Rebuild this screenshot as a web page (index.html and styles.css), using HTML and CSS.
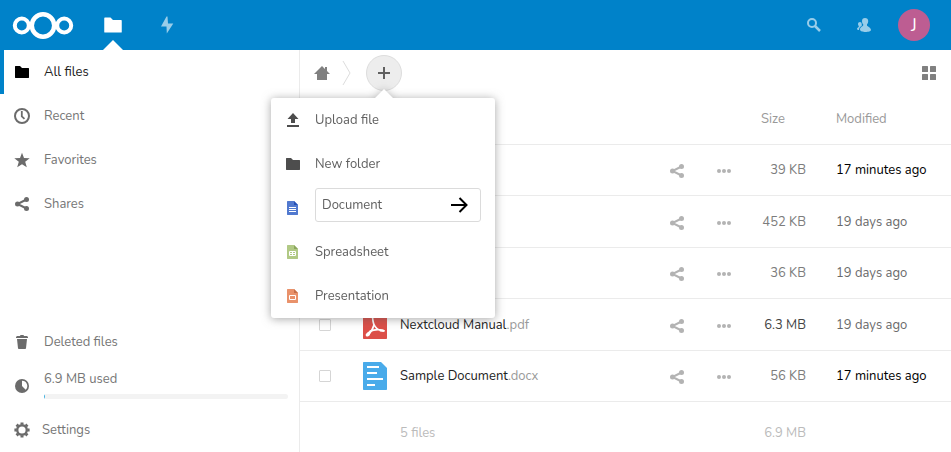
FILE: index.html
```html
<!DOCTYPE html>
<html lang="en">
<head>
<meta charset="utf-8">
<title>Files</title>
<link rel="stylesheet" href="styles.css">
</head>
<body>
<svg class="sprite" aria-hidden="true">
  <symbol id="folder" viewBox="0 0 16 16"><path d="M1.5 2C1.2 2 1 2.200 1 2.500v11c0 .3.2.5.5.5h13c.3 0 .5-.2.5-.5v-9c0-.3-.2-.5-.5-.5H8L6 2z"/></symbol>
  <symbol id="share" viewBox="0 0 16 16"><path d="M12.500 3.500L3.500 8l9 4.500" fill="none" stroke="currentColor" stroke-width="2"/><circle cx="12.500" cy="3.500" r="2.500"/><circle cx="3.500" cy="8" r="2.500"/><circle cx="12.500" cy="12.500" r="2.500"/></symbol>
  <symbol id="more" viewBox="0 0 16 16"><circle cx="3" cy="8" r="2"/><circle cx="8" cy="8" r="2"/><circle cx="13" cy="8" r="2"/></symbol>
</svg>
<header class="header">
  <a class="logo" href="#" aria-label="Home">
    <svg width="62" height="30" viewBox="0 0 62 30"><g fill="none" stroke="#fff"><circle cx="31" cy="15.500" r="11.200" stroke-width="4.500"/><circle cx="9.800" cy="15.500" r="7" stroke-width="4"/><circle cx="52.200" cy="15.500" r="7" stroke-width="4"/></g></svg>
  </a>
  <nav class="apps" aria-label="Apps">
    <a class="app current" href="#" aria-label="Files"><svg width="20" height="20"><use href="#folder"/></svg></a>
    <a class="app" href="#" aria-label="Activity"><svg width="20" height="20" viewBox="0 0 20 20"><path d="M9.500 1.500L4 11.500h5.500L9.800 18.500 16.300 8.500h-5.300L10.500 1.500z"/></svg></a>
  </nav>
  <div class="tools">
    <button class="tool" aria-label="Search"><svg width="16" height="16" viewBox="0 0 16 16"><circle cx="6" cy="6" r="4" fill="none" stroke="currentColor" stroke-width="2"/><path d="M9 9l5 5" stroke="currentColor" stroke-width="2.500"/></svg></button>
    <button class="tool" aria-label="Contacts"><svg width="16" height="16" viewBox="0 0 16 16"><path d="M9 1C7 1 6 2.200 6 4c0 1.500.5 2.500 1.200 3.300v1.200C6.500 9.500 4 10 4 12.500 4 14.300 7 15 9.500 15s5.500-.7 5.500-2c0-2.500-3.500-3.300-4-4.500V7.300c.7-.8 1.200-1.800 1.200-3.300C12.200 2.200 11 1 9 1z"/><path d="M4 5C2.800 5 2 5.800 2 7c0 .9.300 1.500.8 2v.8C2.300 10.500 1 10.700 1 12.200c0 .6 1 .8 2 .8 0-2.500 1.500-3.200 2.700-4C6 8.400 6 5 4 5z"/></svg></button>
    <button class="tool" aria-label="Account"><span class="avatar">J</span></button>
  </div>
</header>
<div class="layout">
  <nav class="sidebar" aria-label="Files">
    <a class="entry active" href="#"><svg width="16" height="16"><use href="#folder"/></svg>All files</a>
    <a class="entry" href="#"><svg width="16" height="16" viewBox="0 0 16 16"><circle cx="8" cy="8" r="7" fill="none" stroke="currentColor" stroke-width="2"/><path d="M7.800 3v5.300l2.700 2.500" fill="none" stroke="currentColor" stroke-width="1.800"/></svg>Recent</a>
    <a class="entry" href="#"><svg width="16" height="16" viewBox="0 0 16 16"><path d="M8 .7L10 6l5.700.3-4.500 3.500 1.600 5.500L8 12.200l-4.800 3.100 1.600-5.500L.3 6.300 6 6z"/></svg>Favorites</a>
    <a class="entry" href="#"><svg width="16" height="16"><use href="#share"/></svg>Shares</a>
    <a class="entry trash" href="#"><svg width="16" height="16" viewBox="0 0 16 16"><path d="M6.500 1L6 2H3L2 3v1h12V3l-1-1h-3l-.5-1zM3 5l1 9.200c0 .4.400.8.800.8h6.400c.4 0 .8-.4.800-.8L13 5z"/></svg>Deleted files</a>
    <div class="quota">
      <svg width="16" height="16" viewBox="0 0 16 16"><circle cx="8" cy="8" r="7"/><path d="M8 2.800A5.200 5.200 0 0 1 11.700 11.700L8 8z" fill="#fff"/></svg>
      <div class="usage"><label for="used">6.9 MB used</label><progress id="used" value="0.4" max="100"></progress></div>
    </div>
    <button class="entry settings"><svg width="16" height="16" viewBox="0 0 16 16"><circle cx="8" cy="8" r="4.800" fill="none" stroke="currentColor" stroke-width="2.400"/><path d="M8 .4v2.200M8 13.400v2.200M.4 8h2.200M13.400 8h2.200M2.600 2.600l1.600 1.600M11.800 11.800l1.600 1.600M2.600 13.400l1.600-1.600M11.800 4.200l1.600-1.600" stroke="currentColor" stroke-width="3"/></svg>Settings</button>
  </nav>
  <main class="content">
    <div class="controls">
      <a class="home" href="#" aria-label="Home folder"><svg width="16" height="16" viewBox="0 0 16 16"><path d="M8 1L0 9h3v6h10V9h3l-3-3V2h-2v2z"/></svg></a>
      <svg class="crumb" width="10" height="26" viewBox="0 0 10 26"><path d="M1 1l7 12-7 12" fill="none" stroke="#ddd"/></svg>
      <div class="create">
        <button class="plus" aria-label="New" aria-expanded="true"><svg width="16" height="16" viewBox="0 0 16 16"><path d="M8 2v12M2 8h12" stroke="currentColor" stroke-width="2"/></svg></button>
        <div class="menu">
          <button class="option"><svg width="16" height="16" viewBox="0 0 16 16"><path d="M8 1L2.500 7H6v4h4V7h3.500zM2 13h12v2H2z"/></svg>Upload file</button>
          <button class="option"><svg width="16" height="16"><use href="#folder"/></svg>New folder</button>
          <form class="option">
            <svg width="16" height="16" viewBox="0 0 16 16"><path fill="#5179cf" d="M2.500 1H9l4 4v9.500c0 .3-.2.500-.5.500h-10c-.3 0-.5-.2-.5-.5v-13c0-.3.2-.5.500-.5z"/><path fill="#2550b5" d="M9 1l4 4H9z"/><path d="M4 7.500h7M4 9.500h7M4 11.500h7" stroke="#fff"/></svg>
            <div class="field"><input type="text" aria-label="Document name" value="Document"><button class="submit" type="button" aria-label="Create"><svg width="18" height="18" viewBox="0 0 18 18"><path d="M1 9h15M9.500 2l7 7-7 7" fill="none" stroke="#000" stroke-width="2"/></svg></button></div>
          </form>
          <button class="option"><svg width="16" height="16" viewBox="0 0 16 16"><path fill="#b1c985" d="M2.500 1H9l4 4v9.500c0 .3-.2.500-.5.500h-10c-.3 0-.5-.2-.5-.5v-13c0-.3.2-.5.500-.5z"/><path fill="#8ba65e" d="M9 1l4 4H9z"/><path d="M4.500 7.500h6v4h-6zM4 9.500h7M7.500 7.500v4" fill="none" stroke="#fff"/></svg>Spreadsheet</button>
          <button class="option"><svg width="16" height="16" viewBox="0 0 16 16"><path fill="#e9926b" d="M2.500 1H9l4 4v9.500c0 .3-.2.500-.5.500h-10c-.3 0-.5-.2-.5-.5v-13c0-.3.2-.5.500-.5z"/><path fill="#c5714b" d="M9 1l4 4H9z"/><path d="M4.500 7.500h6v4h-6z" fill="none" stroke="#fff"/></svg>Presentation</button>
        </div>
      </div>
      <button class="view" aria-label="Grid view"><svg width="16" height="16" viewBox="0 0 16 16"><rect x="1" y="1" width="6" height="6" rx=".5"/><rect x="9" y="1" width="6" height="6" rx=".5"/><rect x="1" y="9" width="6" height="6" rx=".5"/><rect x="9" y="9" width="6" height="6" rx=".5"/></svg></button>
    </div>
    <table class="files">
      <colgroup><col class="c-check"><col class="c-icon"><col><col class="c-act"><col class="c-act"><col class="c-size"><col class="c-date"></colgroup>
      <thead><tr><th></th><th></th><th></th><th></th><th></th><th class="size-head">Size</th><th>Modified</th></tr></thead>
      <tbody>
        <tr><td></td><td></td><td></td><td class="act"><button aria-label="Share"><svg width="16" height="16"><use href="#share"/></svg></button></td><td class="act"><button aria-label="More"><svg width="16" height="16"><use href="#more"/></svg></button></td><td class="size">39 KB</td><td class="new">17 minutes ago</td></tr>
        <tr><td></td><td></td><td></td><td class="act"><button aria-label="Share"><svg width="16" height="16"><use href="#share"/></svg></button></td><td class="act"><button aria-label="More"><svg width="16" height="16"><use href="#more"/></svg></button></td><td class="size">452 KB</td><td class="old">19 days ago</td></tr>
        <tr><td></td><td></td><td></td><td class="act"><button aria-label="Share"><svg width="16" height="16"><use href="#share"/></svg></button></td><td class="act"><button aria-label="More"><svg width="16" height="16"><use href="#more"/></svg></button></td><td class="size">36 KB</td><td class="old">19 days ago</td></tr>
        <tr><td class="check"><input type="checkbox" aria-label="Select Nextcloud Manual.pdf"></td><td class="thumb"><svg width="32" height="32" viewBox="0 0 32 32"><path fill="#dc4f48" d="M5 2h16l7 7v20c0 .6-.4 1-1 1H5c-.6 0-1-.4-1-1V3c0-.6.4-1 1-1z"/><path d="M14.300 7c-1.500 1-.5 5 .7 9-1 4-3.500 7.500-5.500 9.800" fill="none" stroke="#fff" stroke-width="1.800"/><path d="M15 15.500c1.500 3.500 4 5.500 7.500 6.500M10.500 22.500c4-1.800 8-2.300 12-1.500" fill="none" stroke="#fff" stroke-width="1.700"/><path d="M12 21.500c-2.500.8-5.500 3-5.300 4.800.3 1.800 2.500 1.700 4-.3zM21 20.200c2.500-.2 5 .2 5 1.600 0 1.500-2.500 1.500-5 .2z" fill="#fff"/></svg></td><td><a class="name" href="#">Nextcloud Manual<span>.pdf</span></a></td><td class="act"><button aria-label="Share"><svg width="16" height="16"><use href="#share"/></svg></button></td><td class="act"><button aria-label="More"><svg width="16" height="16"><use href="#more"/></svg></button></td><td class="size large">6.3 MB</td><td class="old">19 days ago</td></tr>
        <tr><td class="check"><input type="checkbox" aria-label="Select Sample Document.docx"></td><td class="thumb"><svg width="32" height="32" viewBox="0 0 32 32"><path fill="#49abea" d="M5 2h17l6 6v21c0 .6-.4 1-1 1H5c-.6 0-1-.4-1-1V3c0-.6.4-1 1-1z"/><path d="M8 7h12M8 13h10M8 19h16M8 25h8" stroke="#fff" stroke-width="2"/></svg></td><td><a class="name" href="#">Sample Document<span>.docx</span></a></td><td class="act"><button aria-label="Share"><svg width="16" height="16"><use href="#share"/></svg></button></td><td class="act"><button aria-label="More"><svg width="16" height="16"><use href="#more"/></svg></button></td><td class="size">56 KB</td><td class="new">17 minutes ago</td></tr>
      </tbody>
      <tfoot><tr><td></td><td></td><td>5 files</td><td></td><td></td><td class="size">6.9 MB</td><td></td></tr></tfoot>
    </table>
  </main>
</div>
</body>
</html>
```
FILE: styles.css
```css
* { box-sizing: border-box; }
body {
  margin: 0;
  height: 100vh;
  display: flex;
  flex-direction: column;
  overflow: hidden;
  background: #fff;
  color: #222;
  font: 13px/20px Nunito, Lato, sans-serif;
}
button, input { font: inherit; color: inherit; }
button { padding: 0; border: 0; background: none; }
a { color: inherit; text-decoration: none; }
svg { display: block; flex: none; fill: currentColor; }
.sprite { position: absolute; width: 0; height: 0; }

.header { display: flex; flex: none; height: 50px; background: #0082c9; color: #fff; }
.logo { display: flex; align-items: center; padding: 0 20px 0 12px; }
.apps { display: flex; }
.app { position: relative; display: flex; align-items: center; justify-content: center; width: 38px; margin-right: 16px; color: #99cde9; }
.app.current { color: #fff; }
.app.current::after { content: ""; position: absolute; bottom: 0; left: 9px; border: 10px solid transparent; border-top: 0; border-bottom-color: #fff; }
.tools { display: flex; margin-left: auto; padding-right: 12px; }
.tool { display: flex; align-items: center; justify-content: center; width: 50px; color: #99cde9; }
.avatar { width: 32px; height: 32px; border-radius: 50%; background: #bd5d92; color: #fff; font-size: 18px; line-height: 32px; text-align: center; }

.layout { display: flex; flex: 1; min-height: 0; }
.sidebar { display: flex; flex-direction: column; flex: none; width: 300px; border-right: 1px solid #ebebeb; color: #767676; }
.entry { display: flex; flex: none; align-items: center; gap: 14px; height: 44px; padding-left: 14px; text-align: left; }
.active { padding-left: 10px; border-left: 4px solid #0082c9; color: #222; }
.trash { margin-top: auto; }
.settings { gap: 12px; }
.quota { display: flex; align-items: center; gap: 14px; flex: none; height: 44px; padding: 0 11px 0 14px; }
.usage { display: flex; flex: 1; flex-direction: column; gap: 5px; padding-bottom: 4px; }
.entry svg, .quota svg { color: #6b6b6b; }
.entry.active svg { color: #000; }
progress { appearance: none; display: block; width: 100%; height: 5px; border: 0; border-radius: 3px; overflow: hidden; background: #f3f3f3; }
progress::-webkit-progress-bar { background: #f3f3f3; }
progress::-webkit-progress-value { background: #45b2e0; }

.content { flex: 1; min-width: 0; }
.controls { display: flex; align-items: center; height: 44px; padding: 1px 14px 0; color: #808080; }
.crumb { margin: 0 14px 0 12px; }
.create { position: relative; }
.plus { display: flex; align-items: center; justify-content: center; width: 36px; height: 36px; border: 1px solid #ddd; border-radius: 50%; background: #ededed; color: #606060; }
.view { margin-left: auto; }
.menu { position: absolute; z-index: 2; top: 43px; right: -93px; width: 224px; border-radius: 3px; background: #fff; color: #606060; filter: drop-shadow(0 1px 5px rgba(77, 77, 77, .5)); }
.menu::before { content: ""; position: absolute; top: -9px; right: 102px; border: 9px solid transparent; border-top: 0; border-bottom-color: #fff; }
.option { display: flex; align-items: center; gap: 14px; width: 100%; height: 44px; padding: 0 14px; text-align: left; }
.option > svg { color: #4d4d4d; }
.field { display: flex; flex: 1; min-width: 0; height: 34px; margin-bottom: 6px; border: 1px solid #dbdbdb; border-radius: 3px; }
.field input { flex: 1; min-width: 0; padding: 0 6px; border: 0; outline: 0; background: none; }
.submit { padding: 0 12px; }

.files { width: 100%; table-layout: fixed; border-collapse: separate; border-spacing: 0; }
.c-check, .c-icon { width: 50px; }
.c-act { width: 47px; }
.c-size { width: 89px; }
.c-date { width: 115px; }
th, td { padding: 0; white-space: nowrap; }
th { height: 51px; border-bottom: 1px solid #ebebeb; color: #999; font-weight: 400; text-align: left; }
.size-head { padding-left: 14px; }
tbody td { height: 51px; border-bottom: 1px solid #ebebeb; }
tbody tr:nth-child(even) td { height: 52px; }
.check input { appearance: none; display: block; width: 12px; height: 12px; margin: 0 0 0 19px; border: 1px solid #d5d5d5; border-radius: 1px; background: #fff; }
.thumb svg { margin-left: 9px; }
.name span { color: #999; }
.act { padding-top: 2px; color: #b3b3b3; }
.act button { display: block; margin: 0 auto; }
.size { padding-right: 30px; color: #7c7c7c; text-align: right; }
.large { color: #444; }
.new { color: #000; }
.old { color: #6a6a6a; }
tfoot td { height: 62px; color: #bbb; }
tfoot .size { color: #bbb; }
```
